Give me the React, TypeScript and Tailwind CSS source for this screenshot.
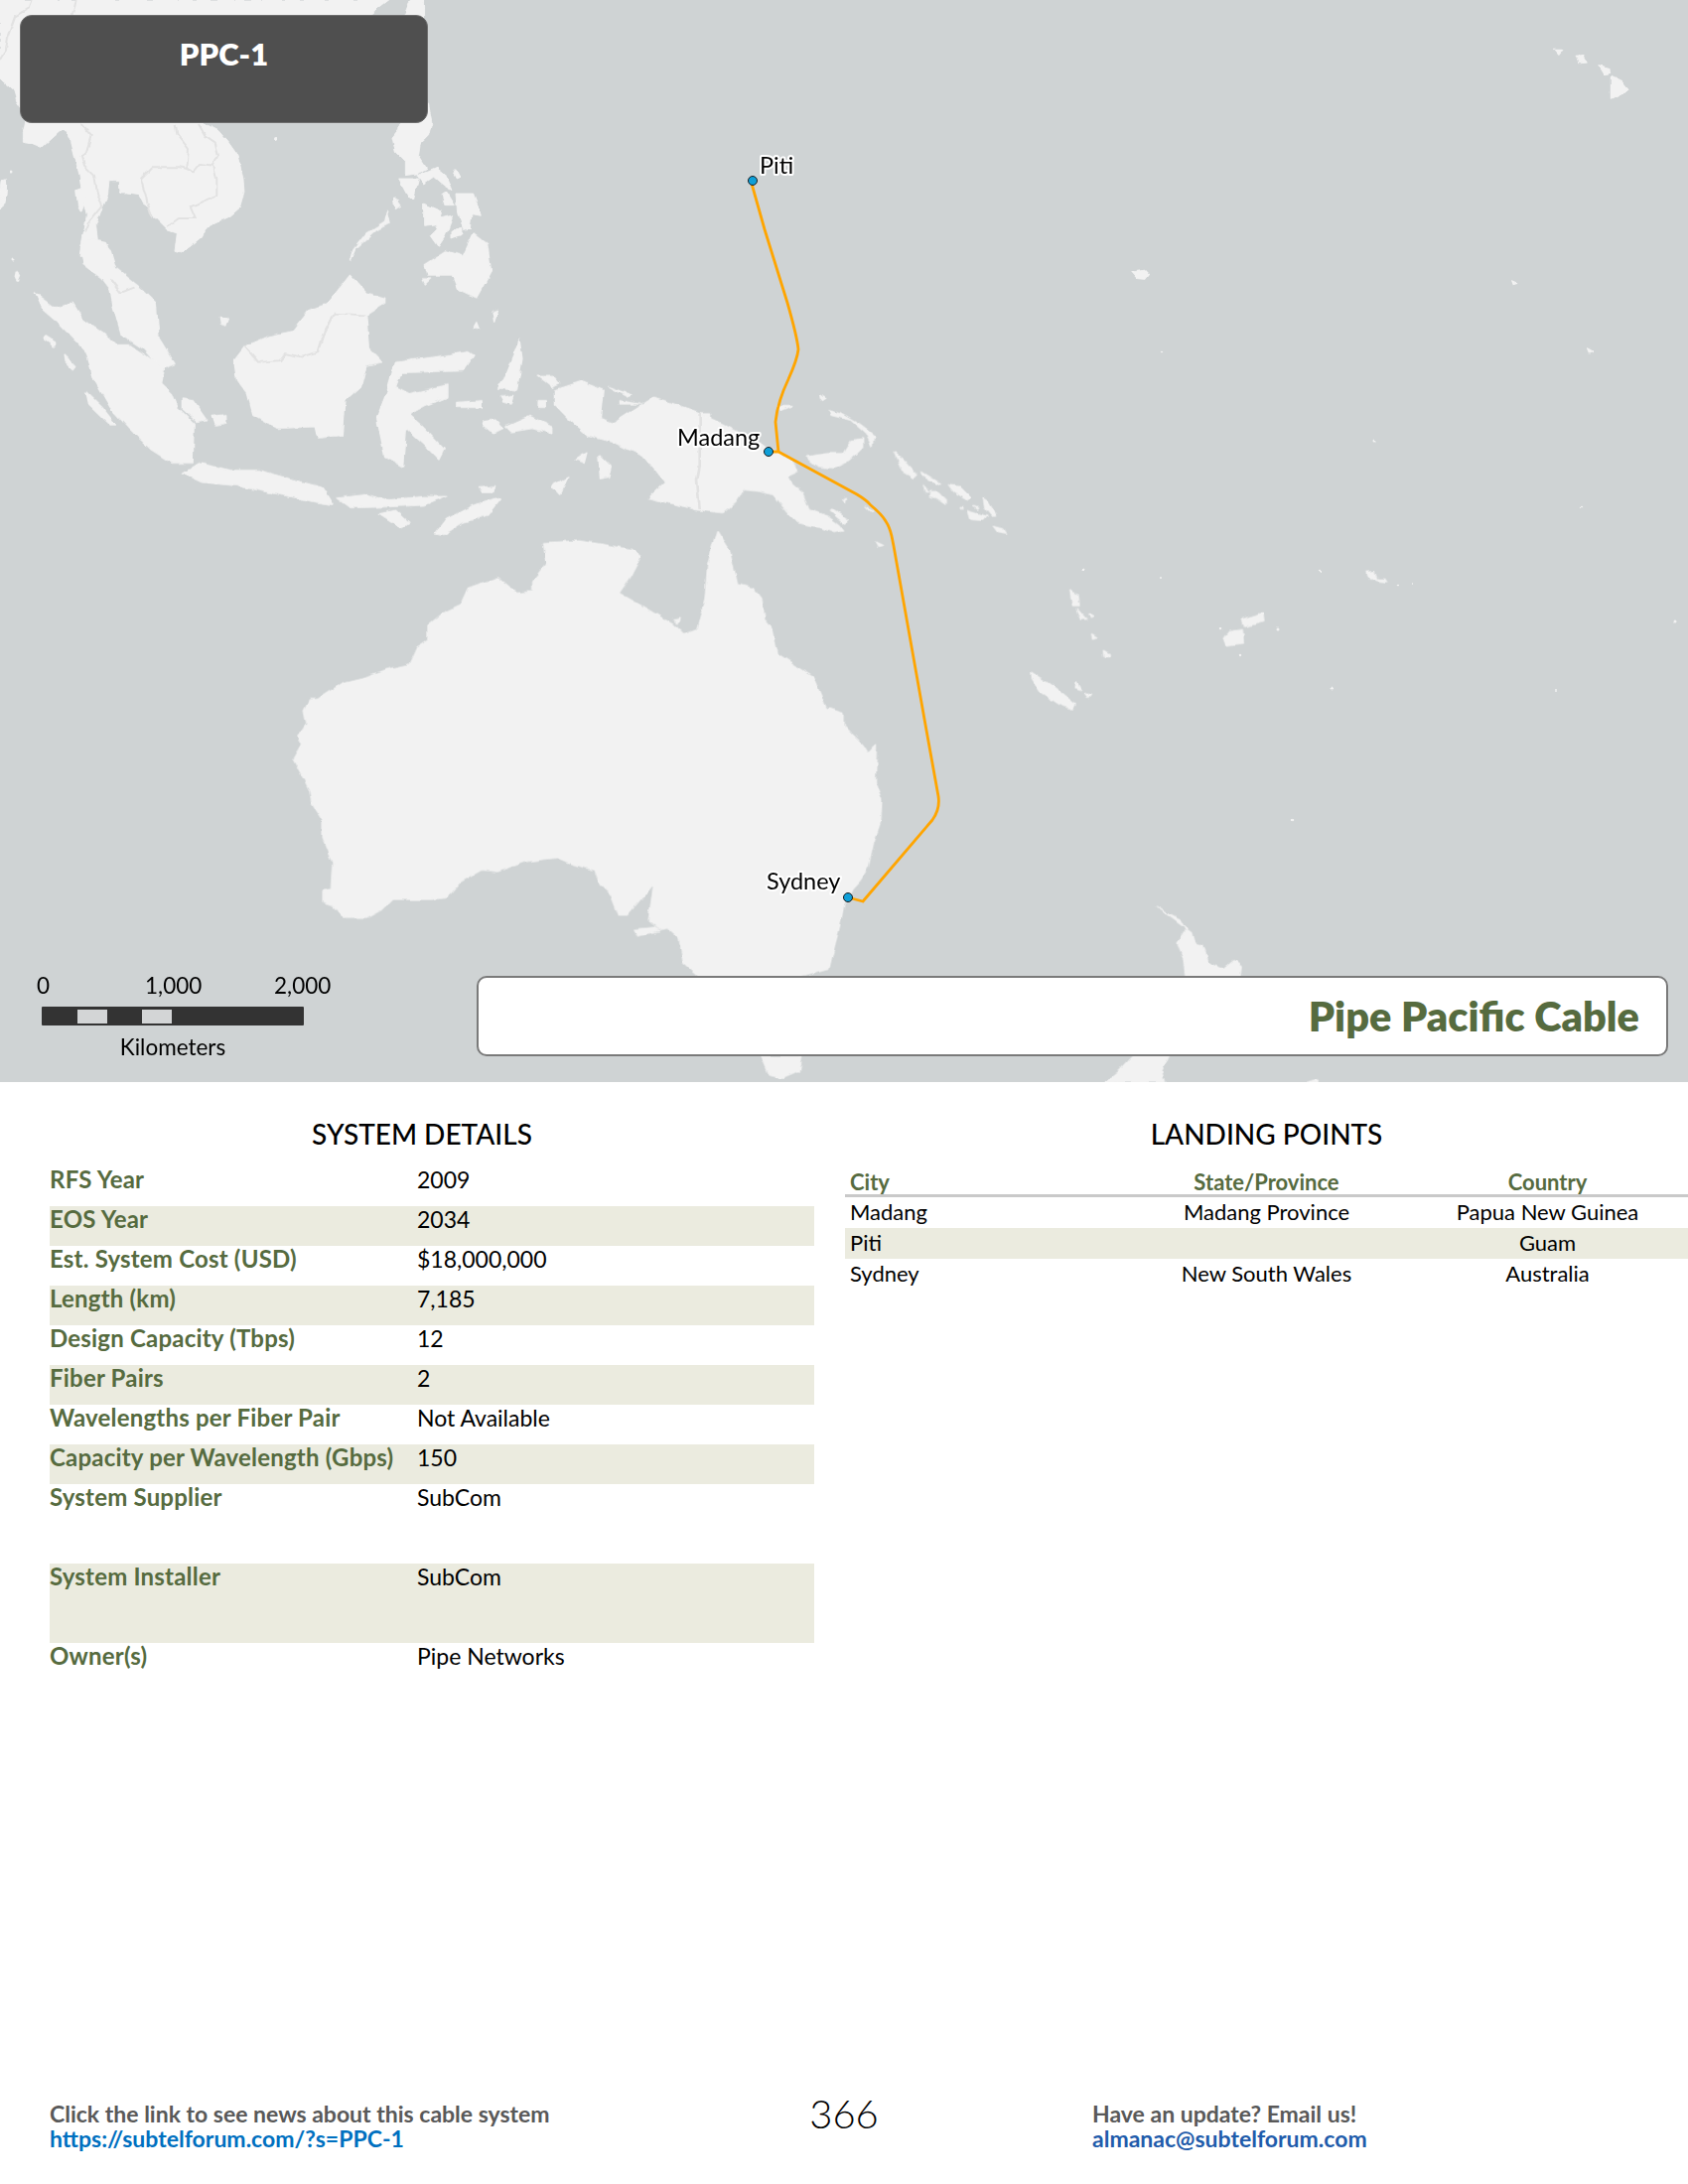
// Cable system sheet: map on top, details and landing points below, links in the footer
const Z1 = 'scale(0.5421 0.3508)'
const Z2 = 'translate(850 0) scale(0.5421 0.3508)'
const Z3 = 'translate(0 550) scale(0.5421 0.3508)'
const Z4 = 'translate(850 550) scale(0.5421 0.3508)'
const Z7 = 'translate(700 380) scale(0.3333)'
const Z8 = 'scale(0.3333)'

const land: [string, string[]][] = [
  [
    Z8,
    [
      '0,0 1175,0 1115,46 900,200 615,372 660,395 690,430 715,465 725,500 735,540 738,580 725,625 690,655 625,685 610,715 580,740 545,765 528,760 535,705 505,695 490,680 470,660 450,625 430,610 420,590 385,585 360,585 358,548 330,548 325,590 310,625 290,680 295,725 320,730 335,775 240,775 250,720 262,650 250,600 240,530 215,430 200,395 180,395 125,445 100,435 70,430 70,400 80,350 50,305 40,270 0,235',
      '1240,0 1280,0 1280,60 1215,60',
      '1295,315 1305,370 1295,410 1270,435 1265,470 1290,510 1260,525 1225,530 1225,490 1195,460 1185,415 1205,390 1215,330',
      '1205,540 1265,540 1250,600 1235,595',
      '1260,530 1320,505 1345,525 1365,575 1340,560 1310,535 1280,555',
      '1380,515 1390,535 1378,540 1370,525',
      '1350,580 1375,620 1345,620 1335,590',
      '1280,615 1335,640 1325,680 1280,685',
      '1380,585 1430,585 1440,610 1450,655 1425,650 1420,690 1400,695 1385,640',
      '1330,660 1370,650 1345,715 1325,745 1300,710 1320,690',
      '1365,700 1395,690 1395,710 1365,720',
      '1190,600 1205,605 1200,625 1188,620',
      '3,550 20,545 18,590 8,625 0,635 0,580',
      '230,575 255,565 260,600 245,640 235,620',
    ],
  ],
  [
    Z1,
    [
      '160,690 185,690 205,720 215,770 260,825 290,870 295,970 325,1045 300,1060 265,1000 225,960 210,880 205,830 190,800 155,760 150,710',
      '65,840 100,880 135,870 155,920 195,960 215,990 240,990 270,1020 305,1060 300,1100 320,1130 330,1170 360,1215 358,1330 320,1330 280,1290 240,1230 205,1170 175,1090 160,1010 110,930 80,890',
      '650,790 680,840 715,855 715,870 680,905 685,1000 710,1040 680,1050 670,1110 640,1150 635,1250 590,1258 585,1225 515,1230 470,1190 460,1130 440,1090 435,1035 455,995 500,965 545,950 575,890 610,870',
      '340,1360 370,1330 430,1350 480,1350 540,1375 600,1400 620,1450 580,1440 520,1420 440,1395 375,1385',
      '625,1430 680,1420 720,1435 790,1425 830,1425 790,1450 720,1455 650,1458',
      '830,1490 880,1450 930,1430 905,1480 860,1500 825,1535 810,1530',
      '705,1475 735,1465 760,1500 745,1515',
      '735,1040 870,1010 880,1020 860,1065 745,1070 735,1110 760,1130 830,1105 830,1140 790,1165 760,1190 785,1225 825,1290 815,1320 790,1280 755,1230 750,1340 715,1310 700,1200 720,1120',
      '935,1090 965,975 970,1030 960,1120 925,1115',
      '1320,1185 1300,1185 1215,1140 1140,1215 1115,1200 1120,1120 1080,1095 1030,1120 1030,1160 1055,1200 1090,1250 1140,1270 1195,1310 1235,1385 1205,1430 1291,1462 1320,1462',
      '790,760 830,720 860,735 880,670 905,700 912,780 885,855 850,830 840,790 795,790',
      '785,800 800,800 790,815',
      '650,750 660,715 700,660 725,640 720,605 715,635 680,670 655,720',
      '735,570 745,590 735,600 730,580',
      '85,965 105,985 100,995 82,975',
      '120,1020 140,1050 135,1060 122,1040',
      '160,1125 190,1170 215,1220 205,1220 165,1160',
      '340,1145 360,1150 385,1205 365,1210 340,1175',
      '395,1195 420,1190 420,1215 400,1220',
      '410,910 425,915 420,935 412,930',
      '885,925 890,945 880,940',
      '915,895 925,890 918,925',
      '900,1210 920,1205 935,1230 915,1245 898,1225',
      '940,1225 985,1195 1025,1225 1025,1245 990,1230 950,1240',
      '850,1155 895,1150 895,1170 850,1170',
      '1112,1305 1135,1340 1130,1370 1115,1375',
      '1025,1395 1055,1370 1040,1420',
      '1070,1320 1090,1300 1085,1330',
      '890,1400 920,1395 915,1415 895,1415',
      '1000,1080 1030,1080 1040,1100 1025,1110',
      '1130,1110 1175,1135 1165,1140',
      '1150,1150 1190,1160 1150,1160',
      '1000,1150 1015,1150 1015,1170 1000,1170',
      '930,1140 955,1135 950,1160 935,1155',
      '5,520 12,530 8,590 0,600',
      '30,780 36,790 32,805 28,795',
      '1525,1135 1535,1145 1530,1150',
    ],
  ],
  [
    Z7,
    [
      '0,105 60,130 130,165 200,200 250,225 300,260 312,285 280,300 290,320 325,350 345,400 400,420 435,445 450,465 420,470 380,455 310,440 290,420 260,385 235,355 190,345 145,340 125,375 85,410 40,405 0,400',
      '335,240 400,230 445,230 470,190 510,185 510,210 470,250 420,275 370,270',
      '405,100 440,110 500,145 540,175 535,210 515,170 470,130 410,115',
      '250,85 295,85 260,100',
      '380,55 392,65 382,65',
      '600,225 630,250 670,295 660,305 625,285',
      '685,285 740,320 730,325 690,300',
      '690,325 705,350 695,350',
      '710,345 735,345 760,370 760,385 730,365 708,360',
      '765,325 800,330 835,365 825,372 780,345',
      '870,365 885,375 912,420 895,420 875,395',
      '822,403 880,420 870,433 830,430',
      '900,450 930,458 942,475 915,470',
      '840,390 858,395 855,400',
      '800,395 808,390 805,400',
      '415,400 445,420 465,435 455,445 425,420 408,405',
      '445,370 455,365 452,378',
      '515,392 538,405 530,408',
      '547,497 570,508 555,512',
    ],
  ],
  [
    Z3,
    [
      '1332,-45 1355,10 1370,110 1400,120 1415,150 1420,210 1435,240 1445,310 1475,340 1510,375 1525,430 1535,465 1568,480 1568,515 1583,540 1603,570 1613,595 1628,570 1626,680 1638,730 1636,790 1623,850 1613,920 1598,960 1583,985 1568,1030 1560,1090 1545,1180 1540,1215 1480,1240 1300,1240 1270,1200 1262,1125 1240,1095 1225,1100 1205,1075 1215,970 1195,1005 1165,1060 1150,1060 1135,1000 1115,970 1105,930 1065,915 1035,895 980,905 925,935 895,930 855,965 830,1010 800,1015 730,1015 710,1045 680,1070 640,1070 620,1035 600,1025 600,990 615,985 618,910 600,840 600,790 580,740 575,700 555,640 545,610 560,570 555,545 570,510 565,470 575,440 590,440 640,390 680,375 715,355 760,340 775,290 795,270 795,225 820,195 855,170 870,120 925,90 960,135 990,130 990,100 1015,50 1010,-10 1075,-15 1120,-5 1175,10 1190,30 1170,90 1150,135 1190,170 1250,225 1270,255 1295,240 1310,150 1315,50',
      '1415,1465 1490,1465 1485,1510 1455,1530 1430,1520',
      '1180,1100 1215,1095 1225,1105 1185,1120',
      '1250,210 1262,205 1258,225',
    ],
  ],
  [
    Z4,
    [
      '580,1035 600,1055 625,1075 635,1105 620,1140 630,1180 635,1240 735,1240 738,1205 725,1190 705,1215 675,1195 665,1145 650,1140 645,1110',
      '540,1460 605,1460 590,1510 595,1540 485,1540 510,1510',
      '860,1540 880,1530 880,1540',
      '420,128 435,140 437,172 425,172',
      '432,180 450,210 440,212',
      '455,192 465,200 460,205',
      '460,255 470,265 462,268',
      '482,300 493,310 492,318 483,318',
      '348,362 385,400 430,455 425,468 405,460 365,420 350,385',
      '432,392 440,415 430,410',
      '448,420 460,425 455,435',
      '740,210 778,192 780,218 745,232',
      '715,245 740,240 742,280 710,285 705,265',
      '970,75 985,72 990,95 975,95',
      '990,95 1005,95 1008,103 990,100',
    ],
  ],
  [
    Z2,
    [
      '1320,140 1335,140 1328,155',
      '1360,160 1372,158 1380,180 1365,182',
      '1402,187 1422,195 1423,210 1412,213',
      '1425,220 1445,235 1457,258 1425,283',
      '533,778 558,773 567,788 560,802 545,800',
      '1241,806 1252,814 1244,818',
      '1381,1000 1390,1008 1384,1012',
    ],
  ],
]

const dots: [number, number, number][] = [
  [277, 140, 2],
  [11, 172, 1.5],
  [14, 262, 1.5],
  [1170, 354, 1.2],
  [1384, 445, 1.5],
  [1592, 511, 1.2],
  [1329, 575, 1.2],
  [1091, 573, 1.5],
  [1407, 590, 1.3],
  [1423, 588, 1],
  [1687, 626, 1.5],
  [1340, 694, 1.5],
  [1567, 696, 1],
  [1302, 826, 1.2],
  [1230, 634, 1.2],
  [1287, 634, 1.5],
  [1249, 661, 1.2],
  [1169, 582, 1],
]

const borders: [string, string[]][] = [
  [
    Z8,
    [
      '95,0 85,25 45,50 20,120 15,155 0,180',
      '230,0 218,46',
      '245,375 275,410 262,455 245,470 255,500 285,530 295,590 310,620 270,670 258,700',
      '530,375 535,405 570,450 565,510 540,505 460,505 425,540 445,610 460,655',
      '600,375 620,410 650,430 660,470 645,500 655,540 655,590 575,625 590,660 540,660 505,685',
      '565,510 585,520 605,495 645,500',
    ],
  ],
  [
    Z1,
    [
      '205,800 225,840 250,825',
      '455,995 480,1040 520,1035 530,1015 560,1025 590,1010 600,960 620,900 680,905',
      '1300,1185 1300,1340 1295,1380 1300,1462',
    ],
  ],
]

const details = [
  ['RFS Year', '2009'],
  ['EOS Year', '2034'],
  ['Est. System Cost (USD)', '$18,000,000'],
  ['Length (km)', '7,185'],
  ['Design Capacity (Tbps)', '12'],
  ['Fiber Pairs', '2'],
  ['Wavelengths per Fiber Pair', 'Not Available'],
  ['Capacity per Wavelength (Gbps)', '150'],
  ['System Supplier', 'SubCom', 'tall'],
  ['System Installer', 'SubCom', 'tall'],
  ['Owner(s)', 'Pipe Networks'],
]

const landings = [
  ['Madang', 'Madang Province', 'Papua New Guinea'],
  ['Piti', '', 'Guam'],
  ['Sydney', 'New South Wales', 'Australia'],
]

function Pin({ x, y, label, lx, ly }: { x: number; y: number; label: string; lx: number; ly: number }) {
  return (
    <>
      <circle cx={x} cy={y} r={4.5} fill="#0e9fd8" stroke="#1a1a1a" strokeWidth={1} />
      <text
        x={lx}
        y={ly}
        fontSize={23.5}
        fill="#000"
        stroke="#fff"
        strokeWidth={4}
        strokeLinejoin="round"
        paintOrder="stroke"
      >
        {label}
      </text>
    </>
  )
}

function MapPanel() {
  return (
    <div className="relative h-[1090px] w-full overflow-hidden bg-[#cfd3d4]">
      <svg viewBox="0 0 1700 1090" className="block h-full w-full">
        <defs>
          <filter id="coast" x="0" y="0" width="100%" height="100%" filterUnits="userSpaceOnUse">
            <feTurbulence type="fractalNoise" baseFrequency="0.09" numOctaves={2} seed={4} />
            <feDisplacementMap in="SourceGraphic" scale={5} xChannelSelector="R" yChannelSelector="G" />
          </filter>
        </defs>
        <g filter="url(#coast)">
          {land.map(([tf, polys], i) => (
            <g key={i} transform={tf} fill="#f2f2f2" stroke="#f2f2f2" strokeWidth={2.5} strokeLinejoin="round">
              {polys.map((p, j) => (
                <polygon key={j} points={p} />
              ))}
            </g>
          ))}
          {dots.map(([cx, cy, r], i) => (
            <circle key={i} cx={cx} cy={cy} r={r} fill="#f2f2f2" />
          ))}
          {borders.map(([tf, lines], i) => (
            <g key={i} transform={tf}>
              {lines.map((p, j) => (
                <polyline key={j} points={p} fill="none" stroke="#e2e2e2" strokeWidth={i === 0 ? 6 : 5} />
              ))}
            </g>
          ))}
        </g>
        <path
          d="M757 185 L770 231 L793 305 Q803 340 804 352 Q803 362 794 382 Q783 405 781 425 L784 455 L774 455 M784 455 L863 498 Q873 504 877 509 Q888 518 892 525 Q896 531 898 540 L900 550 L932 730 L945 802 Q947 815 939 826 L869 908 L854 904"
          fill="none"
          stroke="#ffa500"
          strokeWidth={2.8}
          strokeLinejoin="round"
        />
        <Pin x={758} y={182} label="Piti" lx={765} ly={175} />
        <Pin x={774} y={455} label="Madang" lx={682} ly={449} />
        <Pin x={854} y={904} label="Sydney" lx={772} ly={896} />
      </svg>

      <div className="absolute left-[20px] top-[15px] flex h-[109px] w-[411px] justify-center rounded-[12px] border border-[#6e6e6e] bg-[#4f4f4f] pt-[19px]">
        <span className="text-[31px] font-extrabold leading-[38px] text-white">PPC-1</span>
      </div>

      <div className="absolute left-[30px] top-[978px] w-[300px] text-[22.5px] leading-[30px] text-black">
        <div className="relative h-[30px]">
          <span className="absolute left-[7px]">0</span>
          <span className="absolute left-[116px]">1,000</span>
          <span className="absolute left-[246px]">2,000</span>
        </div>
        <div className="ml-[12px] mt-[6px] flex h-[19px] w-[264px] items-center rounded-[1px] bg-[#333333]">
          <div className="ml-[36px] h-[14px] w-[30px] bg-[#d3d5d6]" />
          <div className="ml-[35px] h-[14px] w-[30px] bg-[#d3d5d6]" />
        </div>
        <div className="ml-[12px] mt-[7px] w-[264px] text-center">Kilometers</div>
      </div>

      <div className="absolute left-[480px] top-[983px] flex h-[81px] w-[1200px] items-center justify-end rounded-[10px] border-2 border-[#7a7a7a] bg-white pr-[27px]">
        <span className="text-[41.5px] font-extrabold leading-none text-[#566b3f]">Pipe Pacific Cable</span>
      </div>
    </div>
  )
}

function SystemDetails() {
  return (
    <div className="w-[770px] shrink-0">
      <h2 className="pr-[20px] text-center text-[28px] font-medium leading-[34px] text-black">SYSTEM DETAILS</h2>
      <div className="mt-[16px]">
        {details.map(([label, value, tall], i) => (
          <div
            key={label}
            className={`flex text-[23px] leading-[26px] ${tall ? 'h-20' : 'h-10'} ${i % 2 === 1 ? 'bg-[#ebebdf]' : ''}`}
          >
            <div className="w-[370px] shrink-0 text-[24px] font-bold tracking-[0.2px] text-[#566b3f]">{label}</div>
            <div className="text-black">{value}</div>
          </div>
        ))}
      </div>
    </div>
  )
}

function LandingPoints() {
  return (
    <div className="flex-1">
      <h2 className="text-center text-[28px] font-medium leading-[34px] text-black">LANDING POINTS</h2>
      <div className="mt-[19px] grid h-[28px] grid-cols-3 border-b-[3px] border-[#c9c9c9] text-[22px] font-bold leading-[26px] text-[#566b3f]">
        <div className="pl-[5px]">City</div>
        <div className="text-center">State/Province</div>
        <div className="text-center">Country</div>
      </div>
      {landings.map(([city, state, country], i) => (
        <div
          key={city}
          className={`grid h-[31px] grid-cols-3 items-center pb-[2px] text-[22px] leading-[26px] text-black ${i === 1 ? 'bg-[#ebebdf]' : ''}`}
        >
          <div className="pl-[5px]">{city}</div>
          <div className="text-center">{state}</div>
          <div className="text-center">{country}</div>
        </div>
      ))}
    </div>
  )
}

function Footer() {
  return (
    <div className="mt-auto grid grid-cols-[750px_100px_1fr] pb-[33px] pl-[50px] text-[23px] font-bold leading-[25px]">
      <div>
        <div className="text-[#595959]">Click the link to see news about this cable system</div>
        <div className="text-[#0070c0]">https://subtelforum.com/?s=PPC-1</div>
      </div>
      <div className="text-center text-[40px] font-light leading-[24px] text-black">366</div>
      <div className="ml-[200px]">
        <div className="text-[#595959]">Have an update? Email us!</div>
        <div className="text-[#1f5cab]">almanac@subtelforum.com</div>
      </div>
    </div>
  )
}

export default function App() {
  return (
    <div className="flex h-[2200px] w-[1700px] flex-col bg-white font-[Lato,sans-serif]">
      <MapPanel />
      <div className="flex gap-[31px] pl-[50px] pt-[35px]">
        <SystemDetails />
        <LandingPoints />
      </div>
      <Footer />
    </div>
  )
}
